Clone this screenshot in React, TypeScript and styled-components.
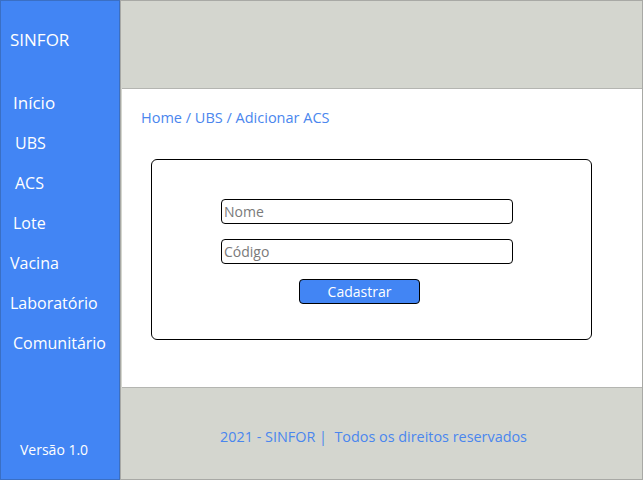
import React from "react";
import styled, { createGlobalStyle } from "styled-components";

const Global = createGlobalStyle`
  html, body { margin: 0; padding: 0; }
  body { font-family: "Open Sans", "Noto Sans", sans-serif; background: #ffffff; }
  * { box-sizing: border-box; }
`;

const Page = styled.div`
  display: flex;
  width: 643px;
  height: 480px;
  overflow: hidden;
`;

const Sidebar = styled.nav`
  width: 120px;
  flex: none;
  height: 100%;
  background: #4285f4;
  border: 1px solid #3a6fc4;
  display: flex;
  flex-direction: column;
  color: #ffffff;
`;

const Brand = styled.div`
  font-size: 17px;
  padding: 27px 0 0 9px;
  line-height: 24px;
  height: 80px;
`;

const Menu = styled.div`
  display: flex;
  flex-direction: column;
  margin-top: 10px;
`;

const MenuItem = styled.a<{ $indent: number; $size?: number }>`
  height: 40px;
  line-height: 24px;
  padding-left: ${(p) => p.$indent}px;
  font-size: ${(p) => p.$size ?? 16}px;
  color: #ffffff;
  text-decoration: none;
`;

const Version = styled.div`
  margin-top: auto;
  padding: 0 0 19px 19px;
  font-size: 14px;
  line-height: 20px;
`;

const Main = styled.div`
  flex: 1;
  display: flex;
  flex-direction: column;
  background: #d4d6cf;
  border: 1px solid #a8a9a5;
`;

const TopBar = styled.div`
  height: 87px;
  flex: none;
`;

const Content = styled.section`
  height: 300px;
  flex: none;
  background: #ffffff;
  border-top: 1px solid #b4b5b1;
  border-bottom: 1px solid #b4b5b1;
  margin-left: 1px;
  padding: 18px 0 0 19px;
`;

const Breadcrumb = styled.div`
  font-size: 14.5px;
  line-height: 22px;
  color: #4a86ee;
`;

const Card = styled.form`
  width: 441px;
  height: 181px;
  margin: 30px 0 0 10px;
  border: 1px solid #000000;
  border-radius: 6px;
  display: flex;
  flex-direction: column;
  align-items: flex-start;
  padding: 39px 0 0 69px;
  gap: 15px;
`;

const Field = styled.input`
  width: 292px;
  height: 25px;
  border: 1px solid #000000;
  border-radius: 4px;
  padding: 0 2px;
  font-family: inherit;
  font-size: 14px;
  color: #333;
  outline: none;
  &::placeholder { color: #7a7a7a; }
`;

const Button = styled.button`
  width: 121px;
  height: 25px;
  margin-left: 78px;
  background: #4285f4;
  border: 1px solid #000000;
  border-radius: 4px;
  color: #ffffff;
  font-family: inherit;
  font-size: 14px;
  padding: 0;
  cursor: pointer;
`;

const Footer = styled.footer`
  flex: 1;
  display: flex;
  align-items: center;
  justify-content: center;
  padding: 5px 16px 0 0;
  font-size: 14.4px;
  color: #4a86ee;
  white-space: pre;
`;

const items: [string, number, number?][] = [
  ["Início", 12, 17],
  ["UBS", 14],
  ["ACS", 14],
  ["Lote", 12],
  ["Vacina", 9],
  ["Laboratório", 9],
  ["Comunitário", 12],
];

export default function App() {
  return (
    <>
      <Global />
      <Page>
        <Sidebar>
          <Brand>SINFOR</Brand>
          <Menu>
            {items.map(([label, indent, size]) => (
              <MenuItem key={label} href="#" $indent={indent} $size={size}>
                {label}
              </MenuItem>
            ))}
          </Menu>
          <Version>Versão 1.0</Version>
        </Sidebar>
        <Main>
          <TopBar />
          <Content>
            <Breadcrumb>Home / UBS / Adicionar ACS</Breadcrumb>
            <Card onSubmit={(e) => e.preventDefault()}>
              <Field placeholder="Nome" />
              <Field placeholder="Código" />
              <Button type="submit">Cadastrar</Button>
            </Card>
          </Content>
          <Footer>{"2021 - SINFOR |  Todos os direitos reservados"}</Footer>
        </Main>
      </Page>
    </>
  );
}
